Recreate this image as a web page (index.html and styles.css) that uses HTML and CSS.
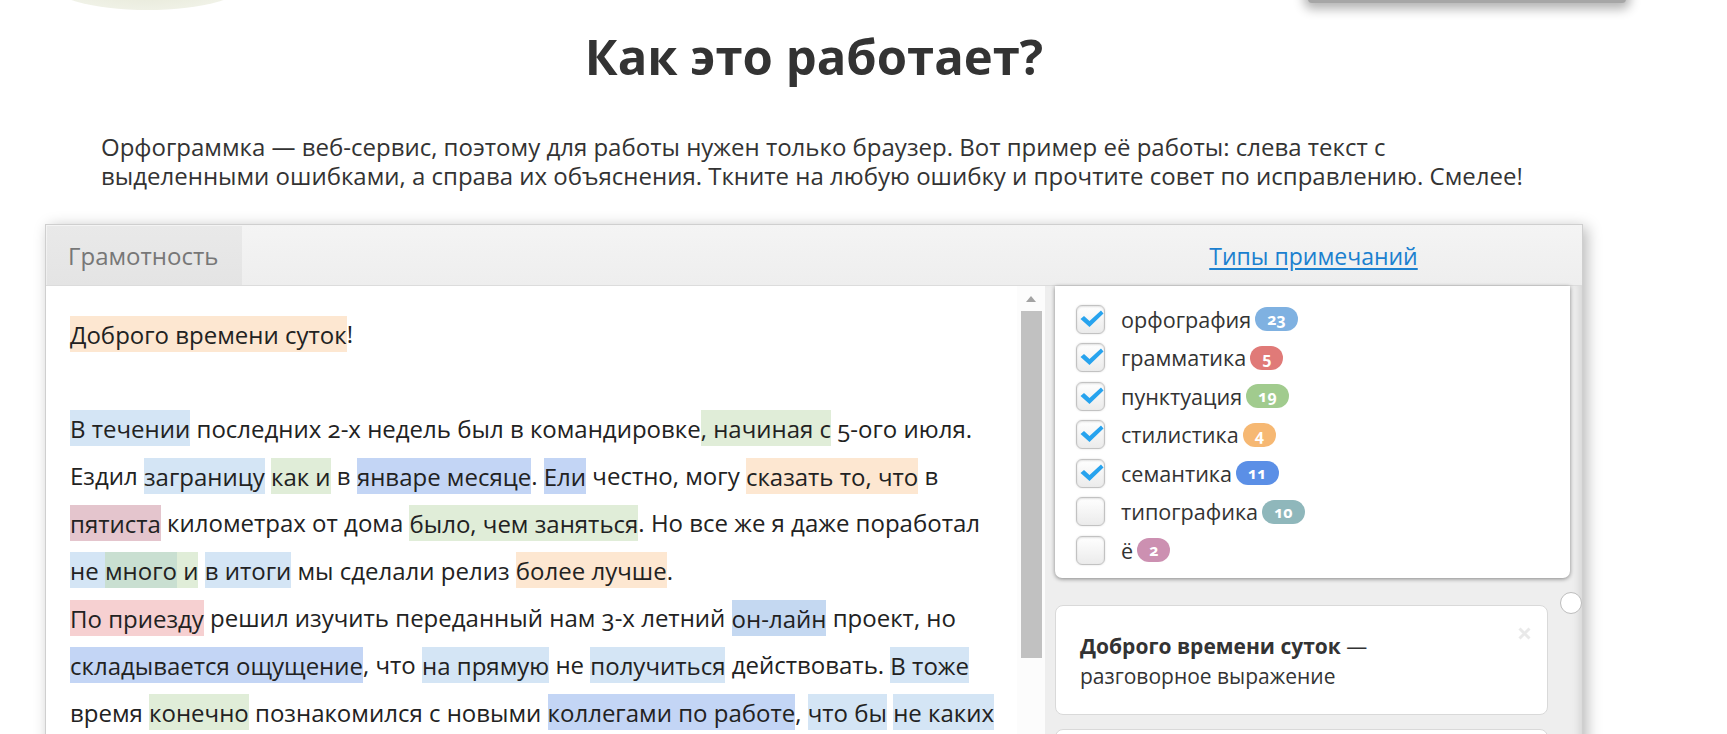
FILE: index.html
```html
<!DOCTYPE html>
<html lang="ru">
<head>
<meta charset="utf-8">
<title>Как это работает?</title>
<link rel="stylesheet" href="styles.css">
</head>
<body>
<div class="page">
  <div class="deco">
    <div class="deco-ball"></div>
    <div class="deco-shadow"></div>
  </div>
  <h1 class="title">Как это работает?</h1>
  <p class="intro">Орфограммка — веб-сервис, поэтому для работы нужен только браузер. Вот пример её работы: слева текст с выделенными ошибками, а справа их объяснения. Ткните на любую ошибку и прочтите совет по исправлению. Смелее!</p>

  <div class="widget">
    <div class="w-head">
      <div class="tab">Грамотность</div>
      <div class="head-right"><a class="types-link" href="#">Типы примечаний</a></div>
    </div>
    <div class="w-body">
      <div class="text-pane">
        <span class="hl hl-style">Доброго времени суток</span>!<br><br>
        <span class="hl hl-orf">В течении</span> последних 2-х недель был в командировке<span class="hl hl-punct">, начиная с</span> 5-ого июля.<br>
        Ездил <span class="hl hl-orf">заграницу</span> <span class="hl hl-punct">как и</span> в <span class="hl hl-sem">январе месяце</span>. <span class="hl hl-sem">Ели</span> честно, могу <span class="hl hl-style">сказать то, что</span> в<br>
        <span class="hl hl-num">пятиста</span> километрах от дома <span class="hl hl-punct">было, чем заняться</span>. Но все же я даже поработал<br>
        <span class="hl hl-orf">не </span><span class="hl hl-mix">много</span><span class="hl hl-punct"> и</span> <span class="hl hl-orf">в итоги</span> мы сделали релиз <span class="hl hl-style">более лучше</span>.<br>
        <span class="hl hl-gram">По приезду</span> решил изучить переданный нам 3-х летний <span class="hl hl-sem2">он-лайн</span> проект, но<br>
        <span class="hl hl-sem">складывается ощущение</span>, что <span class="hl hl-orf">на прямую</span> не <span class="hl hl-orf">получиться</span> действовать. <span class="hl hl-orf">В тоже</span><br>
        время <span class="hl hl-punct">конечно</span> познакомился с новыми <span class="hl hl-sem">коллегами по работе</span>, <span class="hl hl-orf">что бы</span> <span class="hl hl-orf">не каких</span><br>
        проблем не возникло.
      </div>
      <div class="scrollbar">
        <div class="sb-arrow"></div>
        <div class="sb-thumb"></div>
      </div>
      <div class="side">
        <div class="filters">
          <div class="f-row">
            <span class="cb"><svg class="check" viewBox="0 0 27 27"><path d="M3.5 13 L7 10 L12.5 15 L24 4.5 L26.5 7.5 L12.5 21 Z"/></svg></span>
            <span class="lbl">орфография</span><span class="badge b-orf">23</span>
          </div>
          <div class="f-row">
            <span class="cb"><svg class="check" viewBox="0 0 27 27"><path d="M3.5 13 L7 10 L12.5 15 L24 4.5 L26.5 7.5 L12.5 21 Z"/></svg></span>
            <span class="lbl">грамматика</span><span class="badge b-gram">5</span>
          </div>
          <div class="f-row">
            <span class="cb"><svg class="check" viewBox="0 0 27 27"><path d="M3.5 13 L7 10 L12.5 15 L24 4.5 L26.5 7.5 L12.5 21 Z"/></svg></span>
            <span class="lbl">пунктуация</span><span class="badge b-punct">19</span>
          </div>
          <div class="f-row">
            <span class="cb"><svg class="check" viewBox="0 0 27 27"><path d="M3.5 13 L7 10 L12.5 15 L24 4.5 L26.5 7.5 L12.5 21 Z"/></svg></span>
            <span class="lbl">стилистика</span><span class="badge b-style">4</span>
          </div>
          <div class="f-row">
            <span class="cb"><svg class="check" viewBox="0 0 27 27"><path d="M3.5 13 L7 10 L12.5 15 L24 4.5 L26.5 7.5 L12.5 21 Z"/></svg></span>
            <span class="lbl">семантика</span><span class="badge b-sem">11</span>
          </div>
          <div class="f-row">
            <span class="cb"></span>
            <span class="lbl">типографика</span><span class="badge b-typo">10</span>
          </div>
          <div class="f-row">
            <span class="cb"></span>
            <span class="lbl">ё</span><span class="badge b-yo">2</span>
          </div>
        </div>
        <div class="note">
          <span class="note-pin"></span>
          <svg class="note-close" viewBox="0 0 13 13"><path d="M1.5 1.5 L11.5 11.5 M11.5 1.5 L1.5 11.5"/></svg>
          <div class="note-title"><b>Доброго времени суток</b> —</div>
          <div class="note-desc">разговорное выражение</div>
        </div>
        <div class="note">
          <div class="note-title"><b>В течении</b> —</div>
          <div class="note-desc">ошибка в окончании</div>
        </div>
      </div>
    </div>
  </div>
</div>
</body>
</html>
```

FILE: styles.css
```css
html, body {
  margin: 0;
  padding: 0;
  background: #fff;
}
body {
  font-family: "Open Sans", "DejaVu Sans", sans-serif;
  color: #333;
  overflow: hidden;
}
.page {
  width: 1538px;
  margin-left: 45px;
}

/* top decorations (bottoms of elements cut off above) */
.deco {
  display: flex;
  height: 14px;
  margin-bottom: -14px;
}
.deco-ball {
  flex: none;
  width: 205px;
  height: 60px;
  margin: -50px 0 0 0;
  border-radius: 50%;
  background: radial-gradient(ellipse at 50% 30%, #e3e6d3 0%, #ebeddf 55%, #f7f8f2 100%);
}
.deco-shadow {
  flex: none;
  width: 318px;
  height: 20px;
  margin: -17px 0 0 1058px;
  background: #a6a6a6;
  border-radius: 4px;
  box-shadow: 0 2px 11px 4px rgba(0, 0, 0, 0.3);
}

.title {
  margin: 26px 0 0;
  font-size: 49px;
  line-height: 60px;
  font-weight: 700;
  text-align: center;
  color: #333;
}
.intro {
  margin: 46px 0 34px;
  padding: 0 56px;
  font-size: 24px;
  line-height: 29px;
  color: #333;
}

/* widget */
.widget {
  height: 560px;
  border: 1px solid #cfcfcf;
  background: #fff;
  box-shadow: 4px 3px 14px rgba(0, 0, 0, 0.28);
  display: flex;
  flex-direction: column;
  overflow: hidden;
}
.w-head {
  flex: none;
  display: flex;
  height: 59px;
  padding: 1px 0 0 1px;
  background: linear-gradient(#f4f4f4, #eeeeee);
  border-bottom: 1px solid #dcdcdc;
}
.tab {
  width: 195px;
  box-sizing: border-box;
  padding-left: 21px;
  background: linear-gradient(#e9e9e9, #e4e4e4);
  color: #777;
  font-size: 24px;
  display: flex;
  align-items: center;
}
.head-right {
  margin-left: auto;
  width: 537px;
  display: flex;
  align-items: center;
  justify-content: center;
}
.types-link {
  color: #1b80cf;
  font-size: 23px;
  text-decoration: underline;
  text-underline-offset: 3px;
}

.w-body {
  flex: 1;
  min-height: 0;
  display: flex;
}
.text-pane {
  flex: 1;
  min-width: 0;
  padding: 24px 0 0 24px;
  font-size: 24px;
  line-height: 47.35px;
  color: #222;
  white-space: nowrap;
  overflow: hidden;
  font-variant-numeric: oldstyle-nums;
}
.hl {
  padding: 1.5px 0;
}
.hl-orf { background: #d4e5f5; }
.hl-punct { background: #e0edd8; }
.hl-style { background: #fde7d1; }
.hl-sem { background: #c3d5f5; }
.hl-sem2 { background: #c4d8f1; }
.hl-gram { background: #f6d0d1; }
.hl-num { background: #e4c5cd; }
.hl-mix { background: #c9dfd1; }

.scrollbar {
  flex: none;
  width: 28px;
  background: #fcfcfc;
  display: flex;
  flex-direction: column;
  align-items: center;
}
.sb-arrow {
  margin-top: 10px;
  width: 0;
  height: 0;
  border-left: 5px solid transparent;
  border-right: 5px solid transparent;
  border-bottom: 6px solid #a3a3a3;
}
.sb-thumb {
  margin-top: 9px;
  width: 21px;
  height: 347px;
  background: #c1c1c1;
}

.side {
  flex: none;
  width: 537px;
  box-sizing: border-box;
  padding: 0 12px 0 10px;
  background: #eeeeee;
  box-shadow: inset -8px 0 8px -6px rgba(0, 0, 0, 0.12);
}
.filters {
  background: #fff;
  border-radius: 0 0 7px 7px;
  box-shadow: 0 1px 4px rgba(0, 0, 0, 0.45);
  padding: 14px 21px 8px;
}
.f-row {
  display: flex;
  align-items: center;
  height: 38.5px;
}
.cb {
  flex: none;
  width: 29px;
  height: 29px;
  box-sizing: border-box;
  border: 1px solid #c2c2c2;
  border-radius: 6px;
  background: linear-gradient(#ffffff, #ebebeb);
  box-shadow: inset 0 1px 2px rgba(0, 0, 0, 0.12), 0 0 2px rgba(0, 0, 0, 0.15);
  margin-right: 16px;
  display: flex;
}
.check {
  width: 27px;
  height: 27px;
  fill: #27a3ee;
}
.lbl {
  font-size: 21.6px;
  color: #333;
}
.badge {
  margin-left: 4px;
  height: 24px;
  padding: 0 12px;
  border-radius: 12px;
  display: inline-flex;
  align-items: center;
  color: #fff;
  font-size: 16px;
  font-weight: 700;
  font-variant-numeric: oldstyle-nums;
}
.b-orf { background: #7fb1e1; }
.b-gram { background: #e07a78; }
.b-punct { background: #a1cb8e; }
.b-style { background: #f6b873; }
.b-sem { background: #5b8fe6; }
.b-typo { background: #8fb7bb; }
.b-yo { background: #cc90b1; }

.note {
  position: relative;
  margin-top: 27px;
  width: 493px;
  box-sizing: border-box;
  background: #fff;
  border: 1px solid #d9d9d9;
  border-radius: 8px;
  padding: 25px 24px 23px;
  font-size: 21px;
  line-height: 30px;
  color: #333;
}
.note + .note {
  margin-top: 14px;
}
.note b {
  font-weight: 700;
}
.note-pin {
  position: absolute;
  top: -14px;
  right: -35px;
  width: 20px;
  height: 20px;
  border-radius: 50%;
  background: #fff;
  border: 1px solid #bdbdbd;
}
.note-close {
  position: absolute;
  top: 21px;
  right: 16px;
  width: 13px;
  height: 13px;
  stroke: #e9e9e9;
  stroke-width: 3;
  fill: none;
}
```
